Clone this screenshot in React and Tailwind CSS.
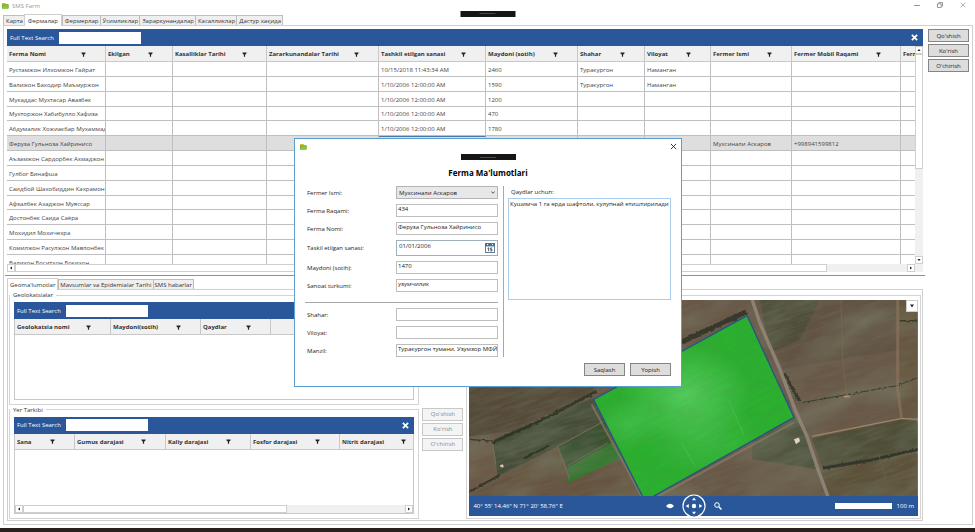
import React from "react";

const farmColumns = [
  { title: "Ferma Nomi", width: "w-[99px]" },
  { title: "Ekilgan", width: "w-[67px]" },
  { title: "Kasalliklar Tarihi", width: "w-[94px]" },
  { title: "Zararkunandalar Tarihi", width: "w-[112px]" },
  { title: "Tashkil etilgan sanasi", width: "w-[107px]" },
  { title: "Maydoni (sotih)", width: "w-[92px]" },
  { title: "Shahar", width: "w-[67px]" },
  { title: "Viloyat", width: "w-[66px]" },
  { title: "Fermer Ismi", width: "w-[81px]" },
  { title: "Fermer Mobil Raqami", width: "w-[109px]" },
  { title: "Ferm", width: "w-[67px]" },
];

const farms = [
  ["Рустамжон Илхомжон Гайрат", "", "", "", "10/15/2018 11:43:34 AM", "2460", "Туракургон", "Наманган"],
  ["Валижон Баходир Маъмуржон", "", "", "", "1/10/2006 12:00:00 AM", "1590", "Туракургон", "Наманган"],
  ["Мукаддас Мухтасар Авазбек", "", "", "", "1/10/2006 12:00:00 AM", "1200"],
  ["Мухторжон Хабибулло Хафиза", "", "", "", "1/10/2006 12:00:00 AM", "470"],
  ["Абдумалик Хожиакбар Мухаммад", "", "", "", "1/10/2006 12:00:00 AM", "1780"],
  ["Феруза Гульноза Хайринисо", "", "", "", "", "", "", "", "Мухсинали Аскаров", "+998941599812"],
  ["Аъзамжон Сардорбек Ахмаджон"],
  ["Гулбог Бинафша"],
  ["Саидбой Шахобиддин Кахрамон"],
  ["Афзалбек Ахаджон Муяссар"],
  ["Достонбек Саида Саёра"],
  ["Мохидил Мохичехра"],
  ["Комилжон Расулжон Мавлонбек"],
  ["Валихон Боситхон Бокихон"],
];

const geoColumns = [
  { title: "Geolokatsia nomi", width: "w-[96px]" },
  { title: "Maydoni(sotih)", width: "w-[90px]" },
  { title: "Qaydlar", width: "w-[70px]" },
  { title: "", width: "" },
];

const soilColumns = [
  { title: "Sana", width: "w-[60px]" },
  { title: "Gumus darajasi", width: "w-[91px]" },
  { title: "Kaliy darajasi", width: "w-[85px]" },
  { title: "Fosfor darajasi", width: "w-[89px]" },
  { title: "Nitrit darajasi", width: "w-[86px]" },
];

function FolderIcon() {
  return (
    <svg className="h-[7px] w-[7px]" viewBox="0 0 7 7" aria-hidden="true">
      <path d="M0 1h3l1 1.2h2.6V6.6H0z" fill="#6aa72c" />
      <path d="M0 1h2.6l.8 1.4H0z" fill="#d9b93a" />
      <path d="M1.2 3.2H7L6 6.8H0z" fill="#8cc63f" />
    </svg>
  );
}

function CloseIcon({ className }) {
  return (
    <svg className={className} viewBox="0 0 8 8" fill="none" stroke="currentColor" aria-hidden="true">
      <path d="M1 1l6 6M7 1l-6 6" />
    </svg>
  );
}

function FilterIcon() {
  return (
    <svg className="h-[5px] w-[5px]" viewBox="0 0 5 5" aria-hidden="true">
      <path d="M.4.4h4.2v.8L3.1 2.8v1.9H1.9V2.8L.4 1.2z" fill="#222" />
    </svg>
  );
}

const arrowPaths = {
  up: "M.4 3L2 1l1.6 2z",
  down: "M.4 1L2 3l1.6-2z",
  left: "M3 .4L1 2l2 1.6z",
  right: "M1 .4L3 2 1 3.6z",
};

function ScrollButton({ dir }) {
  return (
    <button type="button" aria-label={dir} className="flex h-2 w-2 shrink-0 items-center justify-center border border-[#cfcfcf] bg-white">
      <svg className="h-1 w-1" viewBox="0 0 4 4" aria-hidden="true">
        <path d={arrowPaths[dir]} fill="#222" />
      </svg>
    </button>
  );
}

function HorizontalScroll({ thumb }) {
  return (
    <div className="flex h-2 shrink-0 bg-[#f0f0f0]">
      <ScrollButton dir="left" />
      <div className="flex-1">
        <div className={"h-2 border border-[#cfcfcf] bg-white " + thumb} />
      </div>
      <ScrollButton dir="right" />
    </div>
  );
}

function SearchBar({ id }) {
  return (
    <div className="flex h-[17px] shrink-0 items-center bg-[#2a579a] pl-[3px] pr-[5px] text-white">
      <label htmlFor={id} className="w-[49px]">Full Text Search</label>
      <input id={id} className="h-3 w-[82px] bg-white px-1 text-black outline-none" />
      <button type="button" aria-label="Close" className="ml-auto">
        <CloseIcon className="h-[7px] w-[7px] stroke-2" />
      </button>
    </div>
  );
}

function HeaderRow({ columns }) {
  return (
    <tr className="h-4 bg-[#f0f0f0]">
      {columns.map((c, i) => (
        <th key={i} className={"border-b border-r border-[#c8c8c8] p-0 text-left font-bold text-[#333] " + c.width}>
          {c.title && (
            <div className="flex items-center justify-between pl-[2px] pr-[19px] pt-px">
              <span className="whitespace-nowrap">{c.title}</span>
              <FilterIcon />
            </div>
          )}
        </th>
      ))}
    </tr>
  );
}

function SideButton({ children, disabled }) {
  return (
    <button
      type="button"
      disabled={disabled}
      className="h-[13px] w-[41px] border border-[#858585] bg-[#dddddd] text-[#222] disabled:border-[#c8c8c8] disabled:bg-[#f4f4f4] disabled:text-[#8a8a8a]"
    >
      {children}
    </button>
  );
}

function Tabs({ items, active, roomy }) {
  const inactivePadding = roomy ? "pl-[2px] pr-px" : "px-px";
  const activePadding = roomy ? "px-[3px]" : "px-[2px]";
  return (
    <div role="tablist" className="flex h-[10px] items-end">
      {items.map((t) => (
        <button
          key={t}
          type="button"
          role="tab"
          aria-selected={t === active}
          className={
            t === active
              ? "z-10 -mb-px h-3 border border-b-0 border-[#cfcfcf] bg-white " + activePadding
              : "-mr-px h-[10px] border border-b-0 border-[#bdbdbd] bg-[#efefef] " + inactivePadding
          }
        >
          {t}
        </button>
      ))}
    </div>
  );
}

function cellClass(row, col) {
  const selected = row === 5 && col === 4 ? " border-t border-t-[#4f76a8]" : "";
  return "overflow-hidden whitespace-nowrap border-b border-r border-[#bfbfbf] pb-0 pl-[2px] pr-0 pt-[2px] text-[#444]" + selected;
}

function FarmGrid() {
  return (
    <div className="flex h-[243px] flex-col">
      <SearchBar id="farm-search" />
      <div className="flex min-h-0 flex-1">
        <div className="flex min-w-0 flex-1 flex-col">
          <div className="min-h-0 flex-1 overflow-hidden">
            <table className="h-[224px] w-full table-fixed border-separate border-spacing-0">
              <thead>
                <HeaderRow columns={farmColumns} />
              </thead>
              <tbody>
                {farms.map((row, r) => (
                  <tr key={r} className={r === 5 ? "h-[14px] bg-[#dedede]" : "h-[14px]"}>
                    {farmColumns.map((c, i) => (
                      <td key={c.title} className={cellClass(r, i)}>
                        {row[i] || ""}
                      </td>
                    ))}
                  </tr>
                ))}
              </tbody>
            </table>
          </div>
          <HorizontalScroll thumb="w-[91%]" />
        </div>
        <div className="flex w-2 flex-col bg-[#f0f0f0]">
          <ScrollButton dir="up" />
          <div className="flex-1">
            <div className="h-[57%] border border-[#cfcfcf] bg-white" />
          </div>
          <ScrollButton dir="down" />
          <div className="h-2" />
        </div>
      </div>
    </div>
  );
}

function SmallGrid({ id, columns, scroll }) {
  return (
    <div className="flex min-h-0 flex-1 flex-col">
      <SearchBar id={id} />
      <div className="flex min-h-0 flex-1 flex-col border border-t-0 border-[#c8c8c8]">
        <div className="min-h-0 flex-1 overflow-hidden">
          <table className="w-full table-fixed border-separate border-spacing-0">
            <thead>
              <HeaderRow columns={columns} />
            </thead>
          </table>
        </div>
        {scroll && <HorizontalScroll thumb="w-[69%]" />}
      </div>
    </div>
  );
}

function SatelliteMap() {
  return (
    <svg className="h-full w-full" viewBox="0 0 450 197" preserveAspectRatio="xMidYMid slice" role="img" aria-label="Xarita">
      <defs>
        <filter id="soil" x="0" y="0" width="100%" height="100%">
          <feTurbulence type="fractalNoise" baseFrequency="0.04 0.3" numOctaves="5" seed="8" />
          <feColorMatrix values="0 0 0 0 0.14  0 0 0 0 0.14  0 0 0 0 0.1  1.5 0 0 0 -0.55" />
        </filter>
        <filter id="grass" x="0" y="0" width="100%" height="100%">
          <feTurbulence type="fractalNoise" baseFrequency="0.012 0.03" numOctaves="4" seed="21" />
          <feColorMatrix values="0 0 0 0 0.23  0 0 0 0 0.28  0 0 0 0 0.18  0 2.4 0 0 -1" />
        </filter>
        <filter id="rough" x="-10%" y="-30%" width="120%" height="160%">
          <feTurbulence type="fractalNoise" baseFrequency="0.3" numOctaves="2" seed="4" />
          <feDisplacementMap in="SourceGraphic" scale="3" xChannelSelector="R" yChannelSelector="G" />
        </filter>
        <radialGradient id="haze">
          <stop offset="0" stopColor="#6fdc7a" stopOpacity="0.6" />
          <stop offset="1" stopColor="#6fdc7a" stopOpacity="0" />
        </radialGradient>
        <clipPath id="plot">
          <path d="M125 100L279 16L326 118L185 197H174z" />
        </clipPath>
      </defs>
      <rect width="450" height="197" fill="#6a5847" />
      <path d="M286 0h144v50l-115 20z" fill="#625242" />
      <path d="M430 0h20v118h-16z" fill="#68563f" />
      <path d="M0 88h125v6L42 132 0 137z" fill="#564b39" />
      <path d="M25 140L125 98l14 24-50 25-60 30-6-17z" fill="#444c37" />
      <path d="M0 137l24 6 5 35-29 17z" fill="#6c5845" />
      <path d="M89 147l46-25 10 22-46 26z" fill="#3a5230" />
      <path d="M29 180l60-31 12 33 53-22 20 37H0z" fill="#67543f" />
      <path d="M99 168l46-26 9 16-55 26z" fill="#2f7a2a" />
      <path d="M285 128l41-10 14 20 10 32-66-10z" fill="#4a4e39" />
      <path d="M344 139l90-19 16 2v30l-95 18z" fill="#4f4f38" />
      <path d="M352 173l98-19v43h-90z" fill="#5d5239" />
      <path d="M292 0h60l-20 40-30 12z" fill="#4e4c38" />
      <g transform="rotate(-18 225 98)">
        <rect x="-60" y="-90" width="580" height="380" filter="url(#grass)" opacity="0.45" />
        <rect x="-60" y="-90" width="580" height="380" filter="url(#soil)" opacity="0.7" />
      </g>
      <g fill="none" stroke="#262d21" filter="url(#rough)" opacity="0.75">
        <path d="M24 143L70 122l58-30" strokeWidth="3" />
        <path d="M0 140l24 2" strokeWidth="1.5" />
        <path d="M214 42l30-14 34-16" strokeWidth="5" />
        <path d="M0 193l30-17M55 159l26-13" strokeWidth="2" />
        <path d="M316 74l16 28" strokeWidth="3" />
        <path d="M355 169l48-8 47-11" strokeWidth="3" />
        <path d="M335 103l95-17 20-8" strokeWidth="1" />
        <path d="M432 21h18" strokeWidth="1.5" />
      </g>
      <g fill="none" stroke="#94877a">
        <path d="M284 0l8 24 20 46 15 40 12 27 11 33 10 27" strokeWidth="3.5" opacity="0.85" />
        <path d="M344 137l90-18 16 1" stroke="#a08668" strokeWidth="1.3" />
        <path d="M430 0v90l4 29" stroke="#8f765e" strokeWidth="3" opacity="0.6" />
        <path d="M373 0l2 60 4 38" stroke="#7d6b55" strokeWidth="1" opacity="0.6" />
        <path d="M99 166l40-22M89 147l46-25M89 147l12 33M24 146l3 20" stroke="#75705a" strokeWidth="1" />
        <path d="M123 105l50 92M190 197l136-74" stroke="#8a7a66" strokeWidth="2" opacity="0.7" />
        <path d="M281 150l12 14M411 155l8 28" stroke="#6d6248" strokeWidth="1" opacity="0.7" />
      </g>
      <path d="M326 140l5-2 1 4-4 3z" fill="#ddd3c8" />
      <path d="M31 166l3-1 1 3h-3z" fill="#d8c6b8" />
      <path d="M376 96h6v2h-6z" fill="#b18a68" />
      <g clipPath="url(#plot)">
        <rect x="120" y="10" width="210" height="190" fill="#2bb02f" />
        <ellipse cx="218" cy="95" rx="66" ry="50" fill="url(#haze)" />
        <ellipse cx="160" cy="125" rx="34" ry="26" fill="url(#haze)" opacity="0.5" />
        <ellipse cx="235" cy="140" rx="60" ry="36" fill="url(#haze)" opacity="0.4" />
        <g transform="rotate(-28 225 98)" opacity="0.16">
          <rect x="60" y="-60" width="330" height="320" filter="url(#soil)" />
        </g>
        <path d="M213 143l14 24M260 100l16 36" stroke="#5cc65a" strokeWidth="1" opacity="0.5" />
      </g>
      <path d="M174 197L125 100 279 16l47 102-141 79" fill="none" stroke="#235585" strokeWidth="1.3" />
    </svg>
  );
}

function MapPanel() {
  return (
    <div className="relative flex min-h-0 flex-1 flex-col">
      <div className="min-h-0 flex-1 overflow-hidden">
        <SatelliteMap />
      </div>
      <button type="button" aria-label="Menu" className="absolute right-0 top-0 flex h-3 w-3 items-center justify-center border border-[#ccc] bg-white">
        <svg className="h-1 w-1" viewBox="0 0 4 4" aria-hidden="true">
          <path d="M0 .5h4L2 3.5z" fill="#222" />
        </svg>
      </button>
      <div className="grid h-5 shrink-0 grid-cols-[1fr_auto_1fr] items-center bg-[#2a579a] px-1 text-white">
        <span>40° 55' 14.46" N 71° 20' 58.76" E</span>
        <div className="flex items-center gap-2">
          <svg className="h-[6px] w-[8px]" viewBox="0 0 8 6" aria-hidden="true">
            <path d="M0 3Q4-1.6 8 3Q4 7.6 0 3z" fill="#fff" />
          </svg>
          <svg className="-my-1 h-6 w-6" viewBox="0 0 24 24" fill="#fff" aria-hidden="true">
            <circle cx="12" cy="12" r="11" fill="#2a579a" stroke="#fff" strokeWidth="1.2" />
            <circle cx="12" cy="12" r="2.2" />
            <path d="M12 3.6l2 2.6h-4zM12 20.4l2-2.6h-4zM3.6 12l3.2-2v4zM20.4 12l-3.2-2v4z" />
          </svg>
          <svg className="h-2 w-2" viewBox="0 0 8 8" fill="none" stroke="#fff" aria-hidden="true">
            <circle cx="3" cy="3" r="2.3" />
            <path d="M4.8 4.8L7.5 7.5" strokeWidth="1.5" />
          </svg>
        </div>
        <div className="flex items-center justify-end gap-[5px]">
          <div className="h-[6px] w-[57px] bg-white" />
          <span>100 m</span>
        </div>
      </div>
    </div>
  );
}

function Handle() {
  return (
    <div className="flex h-[6px] w-[55px] items-center justify-center bg-[#161616]">
      <div className="h-px w-4 bg-[#4a4a4a]" />
    </div>
  );
}

function Field({ id, label, value }) {
  return (
    <div className="flex h-[13px] items-center">
      <label htmlFor={id} className="w-[91px] shrink-0 pl-[2px]">{label}</label>
      <input id={id} defaultValue={value} className="h-[13px] min-w-0 flex-1 border border-[#bdbdbd] bg-white pb-[3px] pl-px text-[#222] outline-none" />
    </div>
  );
}

function FarmDialog() {
  return (
    <div role="dialog" aria-labelledby="dialog-title" className="absolute left-[294px] top-[138px] z-20 flex h-[249px] w-[388px] flex-col border border-[#5a9fd0] bg-white text-[#222]">
      <div className="flex h-[15px] items-center justify-between pl-[5px] pr-1">
        <FolderIcon />
        <button type="button" aria-label="Yopish">
          <CloseIcon className="h-[7px] w-[7px]" />
        </button>
      </div>
      <div className="flex flex-col items-center">
        <Handle />
        <h1 id="dialog-title" className="mt-2 text-[8px] font-bold leading-[10px] text-black">Ferma Ma'lumotlari</h1>
      </div>
      <div className="mt-2 flex px-[10px]">
        <div className="flex w-[199px] flex-col gap-[5px] border-r border-[#a8a8a8] pr-[5px]">
          <div className="flex h-[13px] items-center">
            <label htmlFor="farmer" className="w-[91px] shrink-0 pl-[2px]">Fermer Ismi:</label>
            <div className="relative flex-1">
              <select id="farmer" className="block h-[13px] w-full appearance-none border border-[#b4b4b4] bg-[#e8e8e8] pl-[2px] outline-none">
                <option>Мухсинали Аскаров</option>
              </select>
              <svg className="pointer-events-none absolute right-[3px] top-[5px] h-[3px] w-1" viewBox="0 0 4 3" fill="none" stroke="#555" aria-hidden="true">
                <path d="M.3.5L2 2.3 3.7.5" />
              </svg>
            </div>
          </div>
          <Field id="number" label="Ferma Raqami:" value="434" />
          <Field id="name" label="Ferma Nomi:" value="Феруза Гульноза Хайринисо" />
          <div className="flex h-4 items-center">
            <label htmlFor="date" className="w-[91px] shrink-0 pl-[2px]">Taskil etilgan sanasi:</label>
            <div className="flex h-4 min-w-0 flex-1 items-center border border-[#9fb0bd] px-[2px]">
              <input id="date" defaultValue="01/01/2006" className="min-w-0 flex-1 pb-1 outline-none" />
              <button type="button" aria-label="Kalendar">
                <svg className="h-[10px] w-[10px]" viewBox="0 0 10 10" aria-hidden="true">
                  <rect x="0.5" y="0.5" width="9" height="9" fill="#fff" stroke="#5f7f9c" />
                  <path d="M0 0h10v3.4H0z" fill="#44749c" />
                  <path d="M2 1h1v1H2zM7 1h1v1H7z" fill="#fff" />
                  <path d="M2.6 5.4l1-.6v3.4M5.2 8h1.7V6.4H5.4V5h1.8" fill="none" stroke="#333" strokeWidth="0.8" />
                </svg>
              </button>
            </div>
          </div>
          <Field id="area" label="Maydoni (sotih):" value="1470" />
          <Field id="industry" label="Sanoat turkumi:" value="узумчилик" />
          <hr className="mt-[5px] border-t border-[#a8a8a8]" />
          <Field id="city" label="Shahar:" value="" />
          <Field id="region" label="Viloyat:" value="" />
          <Field id="address" label="Manzil:" value="Туракургон тумани, Узумзор МФЙ" />
        </div>
        <div className="flex flex-1 flex-col pl-1">
          <label htmlFor="notes" className="h-3 pl-[3px] pt-[2px]">Qaydlar uchun:</label>
          <textarea id="notes" defaultValue="Кушимча 1 га ерда шафтоли, кулупнай етиштирилади" className="h-[102px] w-full resize-none border border-[#a9cdec] bg-white p-px outline-none" />
        </div>
      </div>
      <div className="mb-[10px] mr-[10px] mt-auto flex justify-end gap-[5px]">
        <SideButton>Saqlash</SideButton>
        <SideButton>Yopish</SideButton>
      </div>
    </div>
  );
}

export default function App() {
  return (
    <div className="relative flex h-screen flex-col overflow-hidden bg-white font-['Open_Sans','Noto_Sans',sans-serif] text-[6px] leading-[8px] text-[#333]">
      <header className="grid h-[15px] shrink-0 grid-cols-[1fr_auto_1fr] items-center px-[2px]">
        <div className="flex items-center gap-[3px] pb-1 text-[#9a9a9a]">
          <FolderIcon />
          <span>SMS Farm</span>
        </div>
        <div className="relative z-10 h-1">
          <div className="absolute left-1/2 top-[5px] -translate-x-1/2">
            <Handle />
          </div>
        </div>
        <div className="flex items-center justify-end gap-[17px] pb-[5px] pr-[7px] text-[#999]">
          <button type="button" aria-label="Minimize">
            <svg className="h-[6px] w-[6px]" viewBox="0 0 6 6" stroke="currentColor" aria-hidden="true"><path d="M0 3.5h6" /></svg>
          </button>
          <button type="button" aria-label="Restore">
            <svg className="h-[6px] w-[6px]" viewBox="0 0 6 6" fill="none" stroke="currentColor" aria-hidden="true"><path d="M.5 1.8h3.7v3.7H.5zM1.8 1.5v-1h3.7v3.7h-1" /></svg>
          </button>
          <button type="button" aria-label="Close">
            <CloseIcon className="h-[6px] w-[6px]" />
          </button>
        </div>
      </header>
      <div className="ml-[3px]">
        <Tabs roomy items={["Карта", "Фермалар", "Фермерлар", "Ўсимликлар", "Зараркунандалар", "Касалликлар", "Дастур хақида"]} active="Фермалар" />
      </div>
      <main className="mb-[3px] ml-[3px] mr-[2px] flex min-h-0 flex-1 gap-[5px] border border-[#cfcfcf] p-[3px]">
        <div className="flex min-w-0 flex-1 flex-col">
          <FarmGrid />
          <hr className="-mx-[2px] my-[3px] border-t border-[#8f8f8f]" />
          <Tabs items={["Geoma'lumotlar", "Mavsumlar va Epidemialar Tarihi", "SMS habarlar"]} active="Geoma'lumotlar" />
          <div className="grid min-h-0 flex-1 grid-cols-[45%_41px_1fr] grid-rows-[1fr_1fr] gap-x-[3px] gap-y-px border border-[#cfcfcf] p-px">
            <fieldset className="flex min-h-0 min-w-0 flex-col border border-[#d4d4d4] px-1 pb-1 pt-[3px]">
              <legend className="-ml-1 px-[3px]">Geolokatsialar</legend>
              <SmallGrid id="geo-search" columns={geoColumns} />
            </fieldset>
            <div />
            <div className="row-span-2 mt-1 flex min-h-0 flex-col border border-[#d4d4d4] px-[2px] pb-[2px] pt-1">
              <MapPanel />
            </div>
            <fieldset className="flex min-h-0 min-w-0 flex-col border border-[#d4d4d4] px-1 pb-1 pt-[3px]">
              <legend className="-ml-1 px-[3px]">Yer Tarkibi</legend>
              <SmallGrid id="soil-search" columns={soilColumns} scroll />
            </fieldset>
            <div className="flex flex-col gap-[2px] pt-[2px]">
              <SideButton disabled>Qo'shish</SideButton>
              <SideButton disabled>Ko'rish</SideButton>
              <SideButton disabled>O'chirish</SideButton>
            </div>
          </div>
        </div>
        <div className="flex flex-col gap-[2px]">
          <SideButton>Qo'shish</SideButton>
          <SideButton>Ko'rish</SideButton>
          <SideButton>O'chirish</SideButton>
        </div>
      </main>
      <div className="h-1 shrink-0 bg-[#2a211f]" />
      <FarmDialog />
    </div>
  );
}
